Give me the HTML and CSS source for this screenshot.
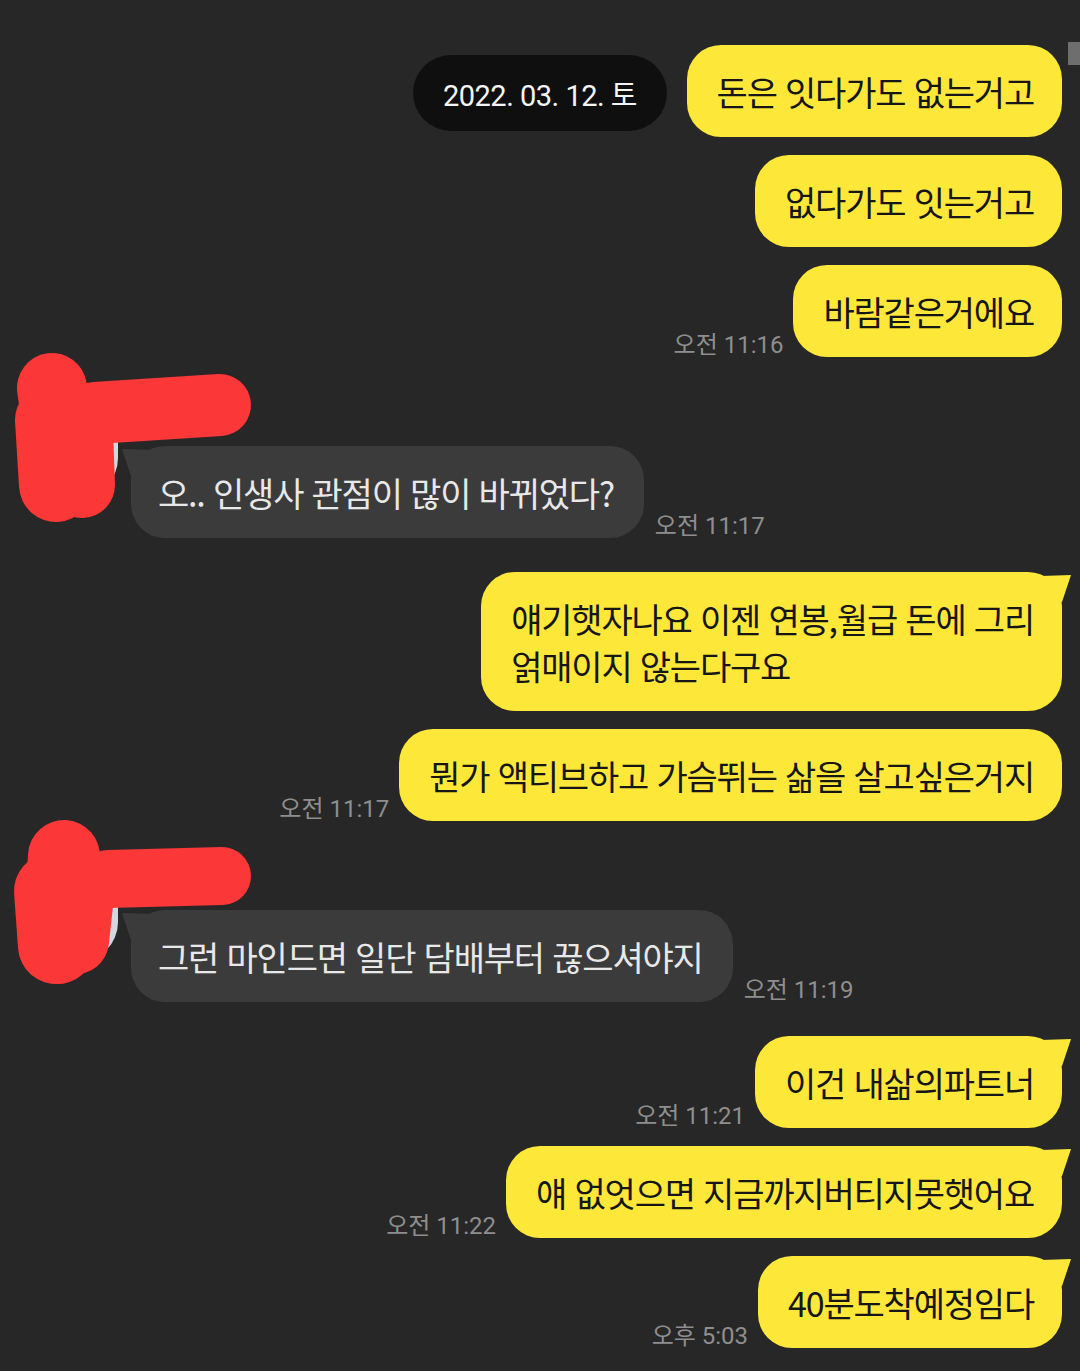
FILE: index.html
```html
<!DOCTYPE html>
<html lang="ko">
<head>
    <meta charset="UTF-8">
    <meta name="viewport" content="width=device-width, initial-scale=1.0">
    <title>채팅</title>
    <link rel="stylesheet" href="styles.css">
</head>
<body>
    <div class="screen">
        <div class="date-pill">2022. 03. 12. 토</div>
        <div class="scrollbar"></div>

        <div class="chat">
            <div class="row me"><div class="bubble">돈은 잇다가도 없는거고</div></div>
            <div class="row me"><div class="bubble">없다가도 잇는거고</div></div>
            <div class="row me"><span class="time">오전 11:16</span><div class="bubble">바람같은거에요</div></div>

            <div class="row other">
                <div class="avatar">
                    <svg class="scribble" width="260" height="190" viewBox="0 0 260 190">
                        <path d="M52 35 L65 127" stroke-width="70"/>
                        <path d="M52 67 L56 132" stroke-width="74"/>
                        <path d="M80 77 L82 132" stroke-width="66"/>
                        <path d="M95 60 L220 52" stroke-width="62"/>
                    </svg>
                </div>
                <div class="msg">
                    <div class="name"></div>
                    <div class="line">
                        <div class="bubble tail">오.. 인생사 관점이 많이 바뀌었다?</div>
                        <span class="time">오전 11:17</span>
                    </div>
                </div>
            </div>

            <div class="row me"><div class="bubble tail">얘기햇자나요 이젠 연봉,월급 돈에 그리<br>얽매이지 않는다구요</div></div>
            <div class="row me"><span class="time">오전 11:17</span><div class="bubble">뭔가 액티브하고 가슴뛰는 삶을 살고싶은거지</div></div>

            <div class="row other">
                <div class="avatar">
                    <svg class="scribble" width="260" height="190" viewBox="0 0 260 190">
                        <path d="M64 39 L58 131" stroke-width="72"/>
                        <path d="M52 74 L56 129" stroke-width="76"/>
                        <path d="M82 69 L76 124" stroke-width="66"/>
                        <path d="M108 62 L222 59" stroke-width="58"/>
                    </svg>
                </div>
                <div class="msg">
                    <div class="name"></div>
                    <div class="line">
                        <div class="bubble tail">그런 마인드면 일단 담배부터 끊으셔야지</div>
                        <span class="time">오전 11:19</span>
                    </div>
                </div>
            </div>

            <div class="row me"><span class="time">오전 11:21</span><div class="bubble tail">이건 내삶의파트너</div></div>
            <div class="row me"><span class="time">오전 11:22</span><div class="bubble tail">얘 없엇으면 지금까지버티지못햇어요</div></div>
            <div class="row me"><span class="time">오후 5:03</span><div class="bubble tail">40분도착예정임다</div></div>
        </div>
    </div>
</body>
</html>
```

FILE: styles.css
```css
body {
    margin: 0;
    padding: 0;
    background-color: #272727;
    font-family: "Noto Sans CJK KR", "Noto Sans", sans-serif;
}
.screen {
    position: relative;
    width: 1080px;
    height: 1371px;
    overflow: hidden;
}
.date-pill {
    position: absolute;
    left: 413px;
    top: 55px;
    width: 254px;
    height: 76px;
    border-radius: 38px;
    background-color: #0f0f0f;
    color: #f4f4f4;
    font-family: Roboto, "Noto Sans CJK KR", sans-serif;
    font-size: 29px;
    letter-spacing: -0.5px;
    display: flex;
    align-items: center;
    justify-content: center;
    z-index: 2;
}
.scrollbar {
    position: absolute;
    right: 0;
    top: 42px;
    width: 12px;
    height: 23px;
    background-color: #6e6e6e;
}
.chat {
    display: flex;
    flex-direction: column;
    gap: 18px;
    padding: 45px 18px 0 18px;
}
.row {
    display: flex;
    align-items: flex-end;
}
.row.me {
    justify-content: flex-end;
    gap: 10px;
}
.row.other {
    align-items: flex-start;
    gap: 13px;
    margin-bottom: 16px;
}
.bubble {
    position: relative;
    max-width: 625px;
    padding: 23px 28px 22px 30px;
    border-radius: 34px;
    background-color: #fde83a;
    color: #161616;
    font-size: 34px;
    line-height: 47px;
    letter-spacing: -1.2px;
    word-break: keep-all;
}
.row.me .bubble.tail::after {
    content: '';
    position: absolute;
    top: 0;
    right: -9px;
    width: 30px;
    height: 30px;
    background-color: #fde83a;
    clip-path: polygon(0 4px, 30px 3px, 21px 30px, 0 30px);
}
.row.other .bubble {
    background-color: #3b3b3b;
    color: #e8e8e8;
    padding: 23px 30px 22px 27px;
}
.row.other .bubble.tail::before {
    content: '';
    position: absolute;
    top: 0;
    left: -9px;
    width: 30px;
    height: 30px;
    background-color: #3b3b3b;
    clip-path: polygon(30px 4px, 0 3px, 9px 30px, 30px 30px);
}
.time {
    color: #8e8e8e;
    font-family: Roboto, "Noto Sans CJK KR", sans-serif;
    font-size: 24px;
    line-height: 24px;
    white-space: nowrap;
}
.avatar {
    position: relative;
    width: 100px;
    height: 100px;
    margin-top: 23px;
    border-radius: 40px;
    background-color: #d3d8e0;
    flex-shrink: 0;
}
.scribble {
    position: absolute;
    left: -18px;
    top: -45px;
    overflow: visible;
}
.scribble path {
    fill: none;
    stroke: #fb3737;
    stroke-linecap: round;
    stroke-linejoin: round;
}
.msg {
    display: flex;
    flex-direction: column;
}
.name {
    height: 71px;
}
.line {
    display: flex;
    align-items: flex-end;
    gap: 11px;
}
```
